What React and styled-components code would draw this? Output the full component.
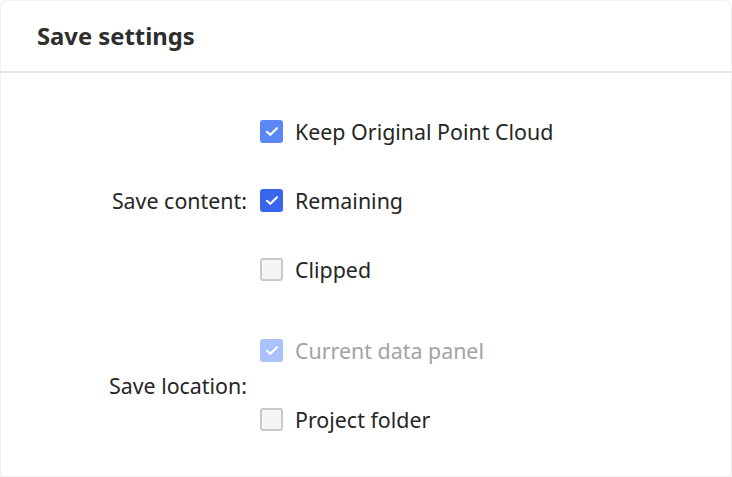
import React, { useState } from "react";
import styled, { createGlobalStyle } from "styled-components";

const GlobalStyle = createGlobalStyle`
  html, body { margin: 0; padding: 0; background: #ffffff; }
  body { font-family: "Noto Sans", "Open Sans", sans-serif; }
`;

// dialog shell
const Dialog = styled.div`
  width: 732px; height: 477px; box-sizing: border-box;
  background: #fff; border: 1px solid #f0f0f0; border-radius: 8px 8px 0 0;
  display: flex; flex-direction: column;
`;
const Header = styled.div`
  height: 70px; display: flex; align-items: center; padding-left: 36px;
  border-bottom: 2px solid #e6e6e6;
`;
const Title = styled.h2`
  margin: 0; font-size: 23.8px; font-weight: 700; color: #2e2e2e;
`;
const Body = styled.div`
  padding-top: 24px; display: flex; flex-direction: column; gap: 12px;
`;
const Group = styled.div`
  display: grid; grid-template-columns: 246px auto; column-gap: 13px; align-items: center;
`;
const Label = styled.div`
  text-align: right; font-size: 21.4px; color: #262626;
`;
const Options = styled.div` display: flex; flex-direction: column; `;
const Option = styled.label`
  height: 69px; display: flex; align-items: center; gap: 12px;
  font-size: 21.4px; color: ${(p) => (p.disabled ? "#a3a3a3" : "#262626")};
  cursor: ${(p) => (p.disabled ? "default" : "pointer")};
`;
const boxColor = { light: "#5b87f5", strong: "#3a66ee", disabled: "#a9c2fc" };
const Box = styled.span`
  width: 23px; height: 23px; flex: none; box-sizing: border-box; border-radius: 3px;
  display: flex; align-items: center; justify-content: center;
  background: ${(p) => (p.checked ? boxColor[p.tone] : "#f4f5f8")};
  border: ${(p) => (p.checked ? "none" : "2px solid #c9c9c9")};
`;

const Check = () => (
  <svg width="14" height="11" viewBox="0 0 14 11" fill="none">
    <path d="M2 5.8 L5.3 8.8 L12 2.2" stroke="#fff" strokeWidth="2.2" strokeLinecap="round" strokeLinejoin="round" />
  </svg>
);

const CheckOption = ({ text, checked, tone = "strong", disabled, onToggle }) => (
  <Option disabled={disabled} onClick={() => !disabled && onToggle && onToggle()}>
    <Box checked={checked} tone={disabled ? "disabled" : tone}>{checked && <Check />}</Box>
    {text}
  </Option>
);

const App = () => {
  const [keep, setKeep] = useState(true);
  const [remaining, setRemaining] = useState(true);
  const [clipped, setClipped] = useState(false);
  const [project, setProject] = useState(false);

  return (
    <>
      <GlobalStyle />
      <Dialog>
        <Header>
          <Title>Save settings</Title>
        </Header>
        <Body>
          <Group>
            <Label>Save content:</Label>
            <Options>
              <CheckOption text="Keep Original Point Cloud" checked={keep} tone="light" onToggle={() => setKeep(!keep)} />
              <CheckOption text="Remaining" checked={remaining} onToggle={() => setRemaining(!remaining)} />
              <CheckOption text="Clipped" checked={clipped} onToggle={() => setClipped(!clipped)} />
            </Options>
          </Group>
          <Group>
            <Label>Save location:</Label>
            <Options>
              <CheckOption text="Current data panel" checked disabled />
              <CheckOption text="Project folder" checked={project} onToggle={() => setProject(!project)} />
            </Options>
          </Group>
        </Body>
      </Dialog>
    </>
  );
};

export default App;
